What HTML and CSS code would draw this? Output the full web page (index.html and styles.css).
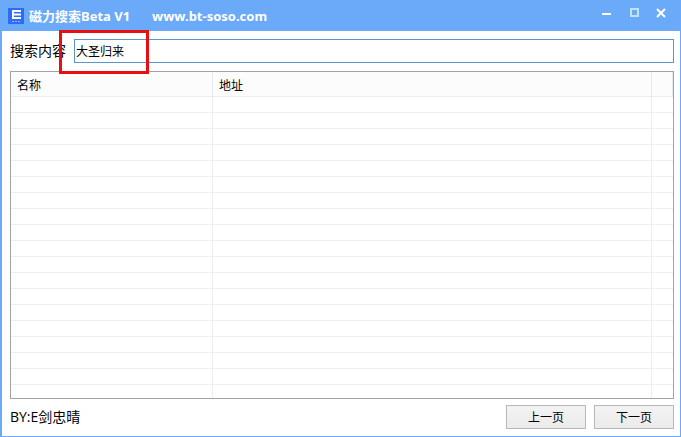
FILE: index.html
```html
<!DOCTYPE html>
<html lang="zh-CN">
<head>
    <meta charset="UTF-8">
    <meta name="viewport" content="width=device-width, initial-scale=1.0">
    <title>磁力搜索Beta V1</title>
    <link rel="stylesheet" href="styles.css">
</head>
<body>
<div class="window">
    <header class="titlebar">
        <svg class="logo" viewBox="0 0 16 16" aria-hidden="true">
            <rect width="16" height="16" fill="#2f6cf6"/>
            <path d="M4 3h9M5 6.500h8M4 10h9M5 3v7" fill="none" stroke="#fff" stroke-width="2"/>
            <path d="M4 13.500h9" stroke="#8fb4fb" stroke-width="1" stroke-dasharray="2 1"/>
        </svg>
        <h1 class="title">
            <span>磁力搜索Beta V1</span>
            <span>www.bt-soso.com</span>
        </h1>
        <div class="controls">
            <button type="button" class="control" aria-label="最小化">
                <svg viewBox="0 0 12 12"><path d="M1 7h9" stroke="#fff" stroke-width="2"/></svg>
            </button>
            <button type="button" class="control" aria-label="最大化">
                <svg viewBox="0 0 12 12"><rect x="3" y="2" width="7" height="7" fill="none" stroke="#bfe2fd" stroke-width="2"/></svg>
            </button>
            <button type="button" class="control" aria-label="关闭">
                <svg viewBox="0 0 12 12"><path d="M2 2l8 8M10 2l-8 8" stroke="#fff" stroke-width="2"/></svg>
            </button>
        </div>
    </header>

    <main class="content">
        <div class="search">
            <label class="search-label" for="keyword">搜索内容</label>
            <div class="search-field">
                <input class="search-input" id="keyword" type="text" value="大圣归来">
                <div class="highlight"></div>
            </div>
        </div>

        <div class="list">
            <table class="results">
                <colgroup>
                    <col class="col-name">
                    <col>
                    <col class="col-rest">
                </colgroup>
                <thead>
                    <tr><th>名称</th><th>地址</th><th></th></tr>
                </thead>
                <tbody>
                    <tr><td></td><td></td><td></td></tr>
                    <tr><td></td><td></td><td></td></tr>
                    <tr><td></td><td></td><td></td></tr>
                    <tr><td></td><td></td><td></td></tr>
                    <tr><td></td><td></td><td></td></tr>
                    <tr><td></td><td></td><td></td></tr>
                    <tr><td></td><td></td><td></td></tr>
                    <tr><td></td><td></td><td></td></tr>
                    <tr><td></td><td></td><td></td></tr>
                    <tr><td></td><td></td><td></td></tr>
                    <tr><td></td><td></td><td></td></tr>
                    <tr><td></td><td></td><td></td></tr>
                    <tr><td></td><td></td><td></td></tr>
                    <tr><td></td><td></td><td></td></tr>
                    <tr><td></td><td></td><td></td></tr>
                    <tr><td></td><td></td><td></td></tr>
                    <tr><td></td><td></td><td></td></tr>
                    <tr><td></td><td></td><td></td></tr>
                    <tr><td></td><td></td><td></td></tr>
                </tbody>
            </table>
        </div>

        <footer class="footer">
            <span class="author">BY:E剑忠晴</span>
            <button type="button" class="page-button">上一页</button>
            <button type="button" class="page-button">下一页</button>
        </footer>
    </main>
</div>
</body>
</html>
```
FILE: styles.css
```css
* {
    box-sizing: border-box;
}
body {
    margin: 0;
    font-family: "Open Sans", "Noto Sans CJK SC", sans-serif;
    font-size: 14px;
    color: #000;
}
.window {
    display: flex;
    flex-direction: column;
    height: 100vh;
    border: solid #6aaaf8;
    border-width: 0 1px 1px 2px;
    background: #fff;
}

/* title bar */
.titlebar {
    display: flex;
    align-items: center;
    height: 31px;
    padding: 0 7px 0 6px;
    background: #6aaaf8;
}
.logo {
    width: 16px;
    height: 16px;
}
.title {
    display: flex;
    flex: 1;
    gap: 22px;
    margin: 0 0 0 5px;
    font-family: "Noto Sans", "Noto Sans CJK SC", sans-serif;
    font-size: 13px;
    font-weight: bold;
    line-height: 20px;
    color: #fff;
}
.controls {
    display: flex;
    gap: 3px;
    padding-bottom: 5px;
}
.control {
    display: flex;
    align-items: center;
    justify-content: center;
    width: 24px;
    height: 20px;
    padding: 0;
    border: 0;
    background: none;
}
.control svg {
    width: 12px;
    height: 12px;
}

.content {
    display: flex;
    flex: 1;
    flex-direction: column;
    min-height: 0;
    padding: 8px 6px 7px 8px;
}

/* search row */
.search {
    display: flex;
    align-items: center;
    gap: 8px;
    margin-bottom: 8px;
}
.search-label {
    line-height: 24px;
}
.search-field {
    position: relative;
    flex: 1;
}
.search-input {
    display: block;
    width: 100%;
    height: 24px;
    padding: 0 1px;
    border: 1px solid #5a96cc;
    background: #fff;
    font-family: inherit;
    font-size: 12px;
    color: #000;
    outline: none;
}
/* red frame drawn over the keyword */
.highlight {
    position: absolute;
    top: -9px;
    left: -15px;
    width: 90px;
    height: 44px;
    border: 3px solid #e60f12;
    pointer-events: none;
}

/* result list */
.list {
    flex: 1;
    min-height: 0;
    overflow: hidden;
    border: 1px solid #a5a2a5;
}
.results {
    width: 100%;
    table-layout: fixed;
    border-collapse: separate;
    border-spacing: 0;
    font-size: 12px;
}
.col-name {
    width: 202px;
}
.col-rest {
    width: 21px;
}
.results th {
    height: 25px;
    padding: 4px 6px 0;
    border-right: 1px solid #e6e8f0;
    border-bottom: 1px solid #ececf2;
    background: #fcfcfc;
    font-weight: normal;
    line-height: 16px;
    text-align: left;
}
.results td {
    height: 16px;
    padding: 0;
    border-right: 1px solid #ededed;
    border-bottom: 1px solid #efefef;
}
.results td:last-child {
    border-right: 0;
}

/* footer */
.footer {
    display: flex;
    align-items: center;
    gap: 8px;
    margin-top: 6px;
}
.author {
    flex: 1;
    line-height: 24px;
}
.page-button {
    width: 80px;
    height: 24px;
    padding: 0;
    border: 1px solid #b8b8b8;
    background: linear-gradient(#f3f3f3, #ebebeb);
    font-family: inherit;
    font-size: 12px;
    color: #000;
}
```
